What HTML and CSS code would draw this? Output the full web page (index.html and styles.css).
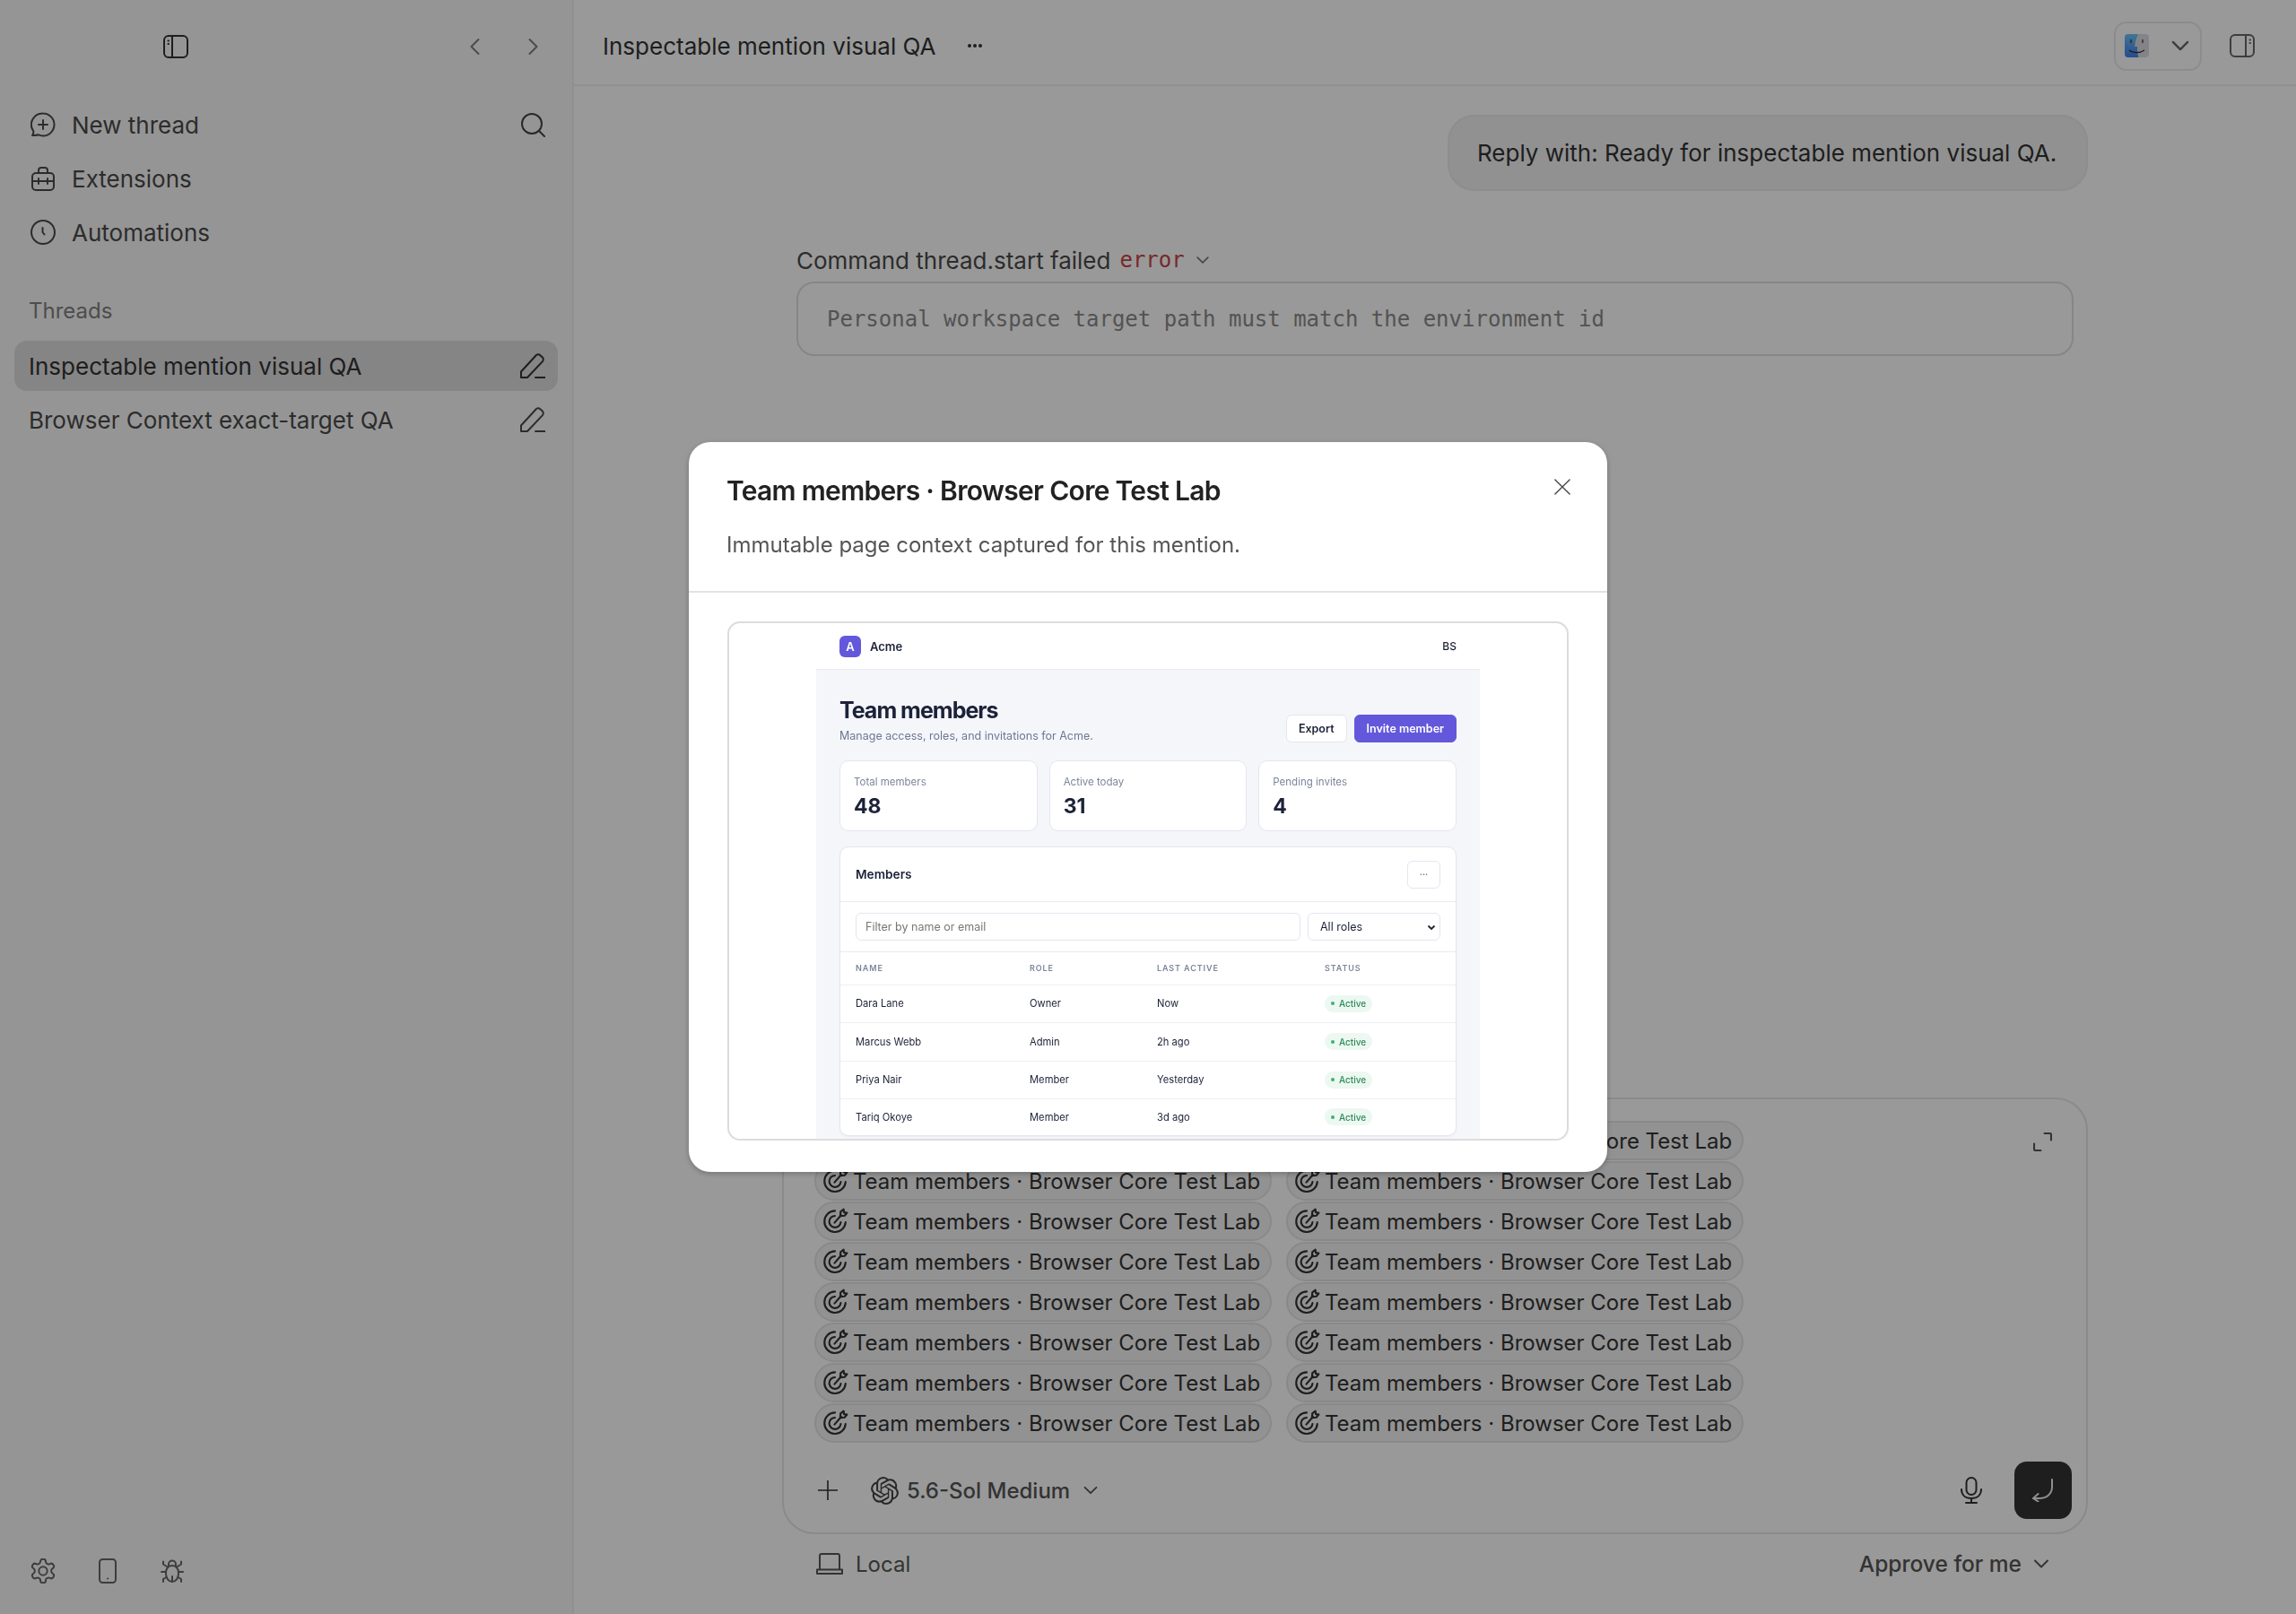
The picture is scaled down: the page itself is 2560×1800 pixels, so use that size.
FILE: index.html
```html
<!DOCTYPE html>
<html lang="en">
<head>
    <meta charset="UTF-8">
    <title>Inspectable mention visual QA</title>
    <link rel="stylesheet" href="styles.css">
</head>
<body>

    <svg class="sprite" width="0" height="0">
        <symbol id="i-target" viewBox="0 0 28 28"><path d="M14 3.2A11 11 0 1 0 25 15"/><path d="M14 8.400A6 6 0 1 0 20 15"/><path d="M13.500 15.500 20.500 7.500"/><path d="M19.500 8.500 19.800 4 23 1.500 23.400 4.800 26.500 5.200 24 8.200z"/></symbol>
        <symbol id="i-pencil" viewBox="0 0 28 28"><path d="M1 27v-6.500L17.500 2.500a3.400 3.400 0 0 1 4.800-.3l2.300 2.100a3.400 3.400 0 0 1 .3 4.800L8 27z"/><path d="M17 27h11"/></symbol>
        <symbol id="i-chev" viewBox="0 0 24 24"><path d="M5 8.500l7 7 7-7"/></symbol>
    </svg>

    <div class="app">
        <aside class="sidebar">
            <div class="side-top">
                <svg class="ic toggle" viewBox="0 0 28 26"><rect x="1" y="1" width="26" height="24" rx="5"/><path d="M10 1v24"/><path d="M5.500 6.500h.5M5.500 10h.5"/></svg>
                <div class="history">
                    <svg class="ic dim" viewBox="0 0 28 28"><path d="M17.500 6 9.500 14l8 8"/></svg>
                    <svg class="ic dim" viewBox="0 0 28 28"><path d="M10.500 6l8 8-8 8"/></svg>
                </div>
            </div>

            <nav class="side-nav">
                <div class="nav-row">
                    <svg class="ic" viewBox="0 0 28 28"><path d="M14 1.500a12.500 12.500 0 0 1 0 25c-2 0-4-.5-5.500-1.300-2 .8-4.500 1-6.500.8 1-1.300 1.500-3 1.300-4.700A12.500 12.500 0 0 1 14 1.500z"/><path d="M14 9v10M9 14h10"/></svg>
                    <span>New thread</span>
                    <svg class="ic search" viewBox="0 0 28 28"><circle cx="13" cy="13" r="11"/><path d="M21 21l6 6"/></svg>
                </div>
                <div class="nav-row">
                    <svg class="ic" viewBox="0 0 28 28"><path d="M9 8V5a3 3 0 0 1 3-3h4a3 3 0 0 1 3 3v3"/><rect x="2" y="8" width="24" height="19" rx="4"/><path d="M2 17h24M9 14v6M19 14v6"/></svg>
                    <span>Extensions</span>
                </div>
                <div class="nav-row">
                    <svg class="ic" viewBox="0 0 28 28"><circle cx="14" cy="14" r="13"/><path d="M13.500 9v5l2 2.500"/></svg>
                    <span>Automations</span>
                </div>
            </nav>

            <div class="side-label">Threads</div>
            <div class="thread-list">
                <div class="thread-row active">
                    <span>Inspectable mention visual QA</span>
                    <svg class="ic"><use href="#i-pencil"/></svg>
                </div>
                <div class="thread-row">
                    <span>Browser Context exact-target QA</span>
                    <svg class="ic"><use href="#i-pencil"/></svg>
                </div>
            </div>

            <div class="side-foot">
                <svg class="ic gear" viewBox="1.500 1.500 21 21"><path d="M12.220 2h-.44a2 2 0 0 0-2 2v.18a2 2 0 0 1-1 1.730l-.43.25a2 2 0 0 1-2 0l-.15-.08a2 2 0 0 0-2.730.73l-.22.38a2 2 0 0 0 .73 2.730l.15.1a2 2 0 0 1 1 1.720v.51a2 2 0 0 1-1 1.740l-.15.09a2 2 0 0 0-.73 2.730l.22.38a2 2 0 0 0 2.730.73l.15-.08a2 2 0 0 1 2 0l.43.25a2 2 0 0 1 1 1.730V20a2 2 0 0 0 2 2h.44a2 2 0 0 0 2-2v-.18a2 2 0 0 1 1-1.730l.43-.25a2 2 0 0 1 2 0l.15.08a2 2 0 0 0 2.730-.73l.22-.39a2 2 0 0 0-.73-2.730l-.15-.08a2 2 0 0 1-1-1.740v-.5a2 2 0 0 1 1-1.740l.15-.09a2 2 0 0 0 .73-2.730l-.22-.38a2 2 0 0 0-2.730-.73l-.15.08a2 2 0 0 1-2 0l-.43-.25a2 2 0 0 1-1-1.730V4a2 2 0 0 0-2-2z"/><circle cx="12" cy="12" r="3.500"/></svg>
                <svg class="ic" viewBox="0 0 28 28"><rect x="5" y="1" width="18" height="26" rx="3.500"/><path d="M14 22.500h.1"/></svg>
                <svg class="ic" viewBox="0 0 28 28"><path d="M10 8V6.500a4 4 0 0 1 8 0V8"/><path d="M14 8c-5 0-7 4-7 9s3 9 7 9 7-4 7-9-2-9-7-9z"/><path d="M14 20v6M7 15H2M21 15h5M8 9 4 6.500V3.500M20 9l4-2.500V3.500M7.500 21 4 23v3M20.500 21l3.500 2v3"/></svg>
            </div>
        </aside>

        <main class="main">
            <header class="main-top">
                <span class="main-title">Inspectable mention visual QA</span>
                <svg class="dots" viewBox="0 0 16 4"><circle cx="2" cy="2" r="2"/><circle cx="8" cy="2" r="2"/><circle cx="14" cy="2" r="2"/></svg>
                <div class="open-in">
                    <svg class="finder" viewBox="0 0 27 26">
                        <defs><linearGradient id="finderblue" x1="0" y1="0" x2="0" y2="1"><stop offset="0" stop-color="#5cc0f5"/><stop offset="1" stop-color="#2f6ff0"/></linearGradient></defs>
                        <rect width="27" height="26" rx="4" fill="#d5dae0"/>
                        <path d="M4 0h11c-2.500 5-3.500 9.500-3.800 14H14c0 4 .3 8 1.400 12H4a4 4 0 0 1-4-4V4a4 4 0 0 1 4-4z" fill="url(#finderblue)"/>
                        <path d="M7 6v4M20 6v4M5 18c4 3.500 12 3.500 17 0" fill="none" stroke="#1a1a1a" stroke-width="1.200"/>
                    </svg>
                    <svg class="ic chev"><use href="#i-chev"/></svg>
                </div>
                <svg class="ic panel" viewBox="0 0 28 26"><rect x="1" y="1" width="26" height="24" rx="5"/><path d="M18 1v24"/><path d="M22.500 6.500h.5M22.500 10h.5"/></svg>
            </header>

            <section class="thread">
                <div class="bubble">Reply with: Ready for inspectable mention visual QA.</div>

                <div class="cmd">
                    <div class="cmd-line">
                        <span>Command thread.start failed</span>
                        <code class="cmd-err">error</code>
                        <svg class="ic cmd-chev"><use href="#i-chev"/></svg>
                    </div>
                    <div class="cmd-box">Personal workspace target path must match the environment id</div>
                </div>

                <div class="composer">
                    <div class="composer-top">
                        <div class="chips">
                            <span class="chip"><svg class="ic"><use href="#i-target"/></svg>Team members · Browser Core Test Lab</span>
                            <span class="chip"><svg class="ic"><use href="#i-target"/></svg>Team members · Browser Core Test Lab</span>
                            <span class="chip"><svg class="ic"><use href="#i-target"/></svg>Team members · Browser Core Test Lab</span>
                            <span class="chip"><svg class="ic"><use href="#i-target"/></svg>Team members · Browser Core Test Lab</span>
                            <span class="chip"><svg class="ic"><use href="#i-target"/></svg>Team members · Browser Core Test Lab</span>
                            <span class="chip"><svg class="ic"><use href="#i-target"/></svg>Team members · Browser Core Test Lab</span>
                            <span class="chip"><svg class="ic"><use href="#i-target"/></svg>Team members · Browser Core Test Lab</span>
                            <span class="chip"><svg class="ic"><use href="#i-target"/></svg>Team members · Browser Core Test Lab</span>
                            <span class="chip"><svg class="ic"><use href="#i-target"/></svg>Team members · Browser Core Test Lab</span>
                            <span class="chip"><svg class="ic"><use href="#i-target"/></svg>Team members · Browser Core Test Lab</span>
                            <span class="chip"><svg class="ic"><use href="#i-target"/></svg>Team members · Browser Core Test Lab</span>
                            <span class="chip"><svg class="ic"><use href="#i-target"/></svg>Team members · Browser Core Test Lab</span>
                            <span class="chip"><svg class="ic"><use href="#i-target"/></svg>Team members · Browser Core Test Lab</span>
                            <span class="chip"><svg class="ic"><use href="#i-target"/></svg>Team members · Browser Core Test Lab</span>
                            <span class="chip"><svg class="ic"><use href="#i-target"/></svg>Team members · Browser Core Test Lab</span>
                            <span class="chip"><svg class="ic"><use href="#i-target"/></svg>Team members · Browser Core Test Lab</span>
                        </div>
                        <svg class="ic expand" viewBox="0 0 20 20"><path d="M12 1h6a1 1 0 0 1 1 1v6M8 19H2a1 1 0 0 1-1-1v-6"/></svg>
                    </div>
                    <div class="toolbar">
                        <svg class="ic plus" viewBox="0 0 22 22"><path d="M11 0v22M0 11h22"/></svg>
                        <svg class="openai" viewBox="0 0 24 24"><path d="M22.2819 9.8211a5.9847 5.9847 0 0 0-.5157-4.9108 6.0462 6.0462 0 0 0-6.5098-2.9A6.0651 6.0651 0 0 0 4.9807 4.1818a5.9847 5.9847 0 0 0-3.9977 2.9 6.0462 6.0462 0 0 0 .7427 7.0966 5.98 5.98 0 0 0 .511 4.9107 6.051 6.051 0 0 0 6.5146 2.9001A5.9847 5.9847 0 0 0 13.2599 24a6.0557 6.0557 0 0 0 5.7718-4.2058 5.9894 5.9894 0 0 0 3.9977-2.9001 6.0557 6.0557 0 0 0-.7475-7.0729zm-9.022 12.6081a4.4755 4.4755 0 0 1-2.8764-1.0408l.1419-.0804 4.7783-2.7582a.7948.7948 0 0 0 .3927-.6813v-6.7369l2.02 1.1686a.071.071 0 0 1 .038.052v5.5826a4.504 4.504 0 0 1-4.4945 4.4944zm-9.6607-4.1254a4.4708 4.4708 0 0 1-.5346-3.0137l.142.0852 4.783 2.7582a.7712.7712 0 0 0 .7806 0l5.8428-3.3685v2.3324a.0804.0804 0 0 1-.0332.0615L9.74 19.9502a4.4992 4.4992 0 0 1-6.1408-1.6464zM2.3408 7.8956a4.485 4.485 0 0 1 2.3655-1.9728V11.6a.7664.7664 0 0 0 .3879.6765l5.8144 3.3543-2.0201 1.1685a.0757.0757 0 0 1-.071 0l-4.8303-2.7865A4.504 4.504 0 0 1 2.3408 7.872zm16.5963 3.8558L13.1038 8.364 15.1192 7.2a.0757.0757 0 0 1 .071 0l4.8303 2.7913a4.4944 4.4944 0 0 1-.6765 8.1042v-5.6772a.79.79 0 0 0-.407-.667zm2.0107-3.0231l-.142-.0852-4.7735-2.7818a.7759.7759 0 0 0-.7854 0L9.409 9.2297V6.8974a.0662.0662 0 0 1 .0284-.0615l4.8303-2.7866a4.4992 4.4992 0 0 1 6.6802 4.66zM8.3065 12.863l-2.02-1.1638a.0804.0804 0 0 1-.038-.0567V6.0742a4.4992 4.4992 0 0 1 7.3757-3.4537l-.142.0805L8.704 5.459a.7948.7948 0 0 0-.3927.6813zm1.0976-2.3654l2.602-1.4998 2.6069 1.4998v2.9994l-2.5974 1.4997-2.6067-1.4997Z"/></svg>
                        <span class="model">5.6-Sol Medium</span>
                        <svg class="ic model-chev"><use href="#i-chev"/></svg>
                        <svg class="ic mic" viewBox="0 0 24 30"><rect x="6.500" y="1" width="11" height="19" rx="5.500"/><path d="M1 14c0 6 4 10 11 10s11-4 11-10M12 24v5M6 29h12"/></svg>
                        <button class="send"><svg class="ic" viewBox="0 0 24 26"><path d="M22 1v8c0 8-6 13-14 13H1"/><path d="M6.500 17 1 22l5.500 3.500"/></svg></button>
                    </div>
                </div>

                <div class="composer-foot">
                    <svg class="ic laptop" viewBox="0 0 30 24"><path d="M4 18V3a2 2 0 0 1 2-2h18a2 2 0 0 1 2 2v15"/><path d="M1 18.500h28V23H1z"/></svg>
                    <span class="local">Local</span>
                    <span class="approve">Approve for me</span>
                    <svg class="ic approve-chev"><use href="#i-chev"/></svg>
                </div>
            </section>
        </main>
    </div>

    <div class="overlay">
        <div class="modal">
            <svg class="ic close" viewBox="0 0 20 20"><path d="M1 1l18 18M19 1 1 19"/></svg>
            <div class="modal-head">
                <h2>Team members · Browser Core Test Lab</h2>
                <p>Immutable page context captured for this mention.</p>
            </div>
            <div class="modal-body">
                <div class="shot">
                    <div class="shot-inner">
                        <div class="acme-nav">
                            <span class="acme-logo">A</span>
                            <span class="acme-name">Acme</span>
                            <span class="acme-user">BS</span>
                        </div>
                        <div class="acme-page">
                            <div class="acme-head">
                                <div>
                                    <h1>Team members</h1>
                                    <p>Manage access, roles, and invitations for Acme.</p>
                                </div>
                                <div class="acme-btns">
                                    <span class="btn">Export</span>
                                    <span class="btn primary">Invite member</span>
                                </div>
                            </div>
                            <div class="stats">
                                <div class="stat"><small>Total members</small><b>48</b></div>
                                <div class="stat"><small>Active today</small><b>31</b></div>
                                <div class="stat"><small>Pending invites</small><b>4</b></div>
                            </div>
                            <div class="members">
                                <div class="members-head">
                                    <b>Members</b>
                                    <span class="more">···</span>
                                </div>
                                <div class="filters">
                                    <span class="filter">Filter by name or email</span>
                                    <span class="role-select">All roles
                                        <svg viewBox="0 0 10 10"><path d="M1.500 3.500 5 7l3.500-3.500"/></svg>
                                    </span>
                                </div>
                                <table>
                                    <thead>
                                        <tr><th>Name</th><th>Role</th><th>Last active</th><th>Status</th></tr>
                                    </thead>
                                    <tbody>
                                        <tr><td>Dara Lane</td><td>Owner</td><td>Now</td><td><span class="badge">Active</span></td></tr>
                                        <tr><td>Marcus Webb</td><td>Admin</td><td>2h ago</td><td><span class="badge">Active</span></td></tr>
                                        <tr><td>Priya Nair</td><td>Member</td><td>Yesterday</td><td><span class="badge">Active</span></td></tr>
                                        <tr><td>Tariq Okoye</td><td>Member</td><td>3d ago</td><td><span class="badge">Active</span></td></tr>
                                    </tbody>
                                </table>
                            </div>
                        </div>
                    </div>
                </div>
            </div>
        </div>
    </div>

</body>
</html>
```

FILE: styles.css
```css
* { box-sizing: border-box; margin: 0; padding: 0; }
html, body { height: 100%; }
body { font-family: Inter, "Noto Sans", sans-serif; font-size: 26px; color: #333; background: #fff; overflow: hidden; }
.sprite { position: absolute; }

.ic { width: 28px; height: 28px; fill: none; stroke: currentColor; stroke-width: 2; stroke-linecap: round; stroke-linejoin: round; flex: none; }

.app { display: flex; height: 1800px; }

/* sidebar */
.sidebar { width: 640px; flex: none; display: flex; flex-direction: column; background: #f9f9f9; border-right: 2px solid #f0f0f0; }
.side-top { height: 96px; flex: none; display: flex; align-items: center; padding: 8px 30px 0 182px; justify-content: space-between; }
.toggle { height: 26px; color: #333; }
.history { display: flex; gap: 36px; }
.dim { color: #7d7d7d; }
.side-nav { margin-top: 13px; }
.nav-row { height: 60px; display: flex; align-items: center; gap: 18px; padding: 0 30px 0 34px; color: #4a4a4a; }
.search { margin-left: auto; color: #444; }
.side-label { margin: 38px 0 13px 32px; line-height: 40px; color: #808080; font-size: 24px; }
.thread-list { display: flex; flex-direction: column; gap: 4px; margin: 0 16px; }
.thread-row { height: 56px; display: flex; align-items: center; justify-content: space-between; padding: 0 14px 0 16px; border-radius: 14px; color: #4a4a4a; }
.thread-row.active { background: #dedede; color: #333; }
.side-foot { margin-top: auto; display: flex; gap: 44px; padding: 0 0 34px 34px; color: #666; }
.gear { stroke-width: 1.500; }

/* main column */
.main { flex: 1; min-width: 0; display: flex; flex-direction: column; }
.main-top { height: 96px; flex: none; display: flex; align-items: center; padding: 8px 46px 0 32px; border-bottom: 2px solid #f0f0f0; }
.main-title { color: #333; }
.dots { width: 16px; height: 4px; margin-left: 36px; fill: #333; }
.open-in { margin-left: auto; width: 98px; height: 55px; display: flex; align-items: center; gap: 21px; padding-left: 10px; border: 2px solid #eaeaea; border-radius: 14px; }
.finder { width: 27px; height: 26px; flex: none; opacity: .9; }
.chev { color: #666; }
.panel { height: 26px; margin-left: 31px; color: #666; }

.thread { flex: 1; width: 1456px; margin: 0 auto; display: flex; flex-direction: column; }
.bubble { align-self: flex-end; width: 714px; height: 85px; margin-top: 32px; display: flex; align-items: center; padding: 0 31px; background: #f2f2f2; border: 2px solid #ececec; border-radius: 30px; color: #333; white-space: nowrap; }

.cmd { margin: 59px 16px 0; }
.cmd-line { height: 36px; display: flex; align-items: center; gap: 10px; color: #4a4a4a; }
.cmd-err { font-family: "DejaVu Sans Mono", "Liberation Mono", monospace; font-size: 24px; color: #c64545; }
.cmd-chev { width: 20px; height: 20px; color: #777; }
.cmd-box { height: 83px; margin-top: 6px; display: flex; align-items: center; padding: 0 32px; border: 2px solid #e0e0e0; border-radius: 20px; font-family: "DejaVu Sans Mono", "Liberation Mono", monospace; font-size: 24px; color: #8a8a8a; }

/* composer */
.composer { margin-top: auto; height: 487px; display: flex; flex-direction: column; padding: 24px 16px 15px 34px; border: 2px solid #e6e6e6; border-radius: 36px; }
.composer-top { display: flex; justify-content: space-between; align-items: flex-start; }
.chips { display: grid; grid-template-columns: 510px 510px; column-gap: 16px; row-gap: 1px; }
.chip { height: 44px; display: flex; align-items: center; gap: 5px; padding-left: 6px; border: 2px solid #e4e4e4; border-radius: 22px; background: #f4f4f4; color: #333; font-size: 24px; white-space: nowrap; }
.chip .ic { width: 30px; height: 30px; }
.expand { width: 21px; height: 21px; margin: 13px 22px 0 0; color: #555; }
.toolbar { margin-top: auto; display: flex; align-items: center; padding-left: 4px; }
.plus { width: 22px; height: 22px; color: #333; stroke-width: 1.600; }
.openai { width: 31px; height: 31px; flex: none; margin-left: 37px; fill: #444; }
.model { margin-left: 9px; color: #555; font-size: 24px; font-weight: 500; }
.model-chev { width: 22px; height: 22px; margin-left: 12px; color: #555; }
.mic { width: 24px; height: 30px; margin-left: auto; color: #333; }
.send { width: 64px; height: 64px; margin-left: 36px; display: flex; align-items: center; justify-content: center; background: #323232; border: none; border-radius: 14px; color: #eee; }
.send .ic { width: 24px; height: 26px; }
.composer-foot { flex: none; height: 40px; margin: 13px 0 36px; display: flex; align-items: center; padding: 0 40px 0 38px; color: #555; font-size: 24px; }
.laptop { width: 30px; height: 24px; }
.local { margin-left: 14px; }
.approve { margin-left: auto; font-size: 24.500px; font-weight: 500; }
.approve-chev { margin-left: 10px; width: 24px; height: 24px; }

/* modal */
.overlay { position: fixed; inset: 0; display: flex; align-items: center; justify-content: center; background: rgba(0, 0, 0, .4); }
.modal { position: relative; width: 1024px; height: 814px; background: #fff; border-radius: 24px; box-shadow: 0 2px 6px rgba(0, 0, 0, .25); }
.close { position: absolute; top: 41px; right: 41px; width: 18px; height: 18px; color: #444; stroke-width: 1.500; }
.modal-head { height: 168px; padding: 34px 42px 0; border-bottom: 2px solid #e3e3e3; }
.modal-head h2 { font-size: 30px; line-height: 40px; font-weight: 600; color: #222; letter-spacing: -.7px; }
.modal-head p { margin-top: 23px; line-height: 36px; font-size: 24px; color: #555; }
.modal-body { padding: 32px 43px 0; }
.shot { height: 579px; background: #fff; border: 2px solid #dcdcdc; border-radius: 14px; overflow: hidden; }
.shot-inner { width: 740px; margin: 0 auto; color: #1c2238; }

.acme-nav { height: 52px; display: flex; align-items: center; padding: 0 26px; border-bottom: 1px solid #e8eaf1; }
.acme-logo { width: 24px; height: 24px; display: flex; align-items: center; justify-content: center; background: #6358dc; border-radius: 6px; color: #fff; font-size: 13px; font-weight: 600; }
.acme-name { margin-left: 10px; font-size: 13px; font-weight: 600; }
.acme-user { margin-left: auto; font-size: 12px; font-weight: 500; }
.acme-page { padding: 30px 26px 20px; background: #f5f6fa; }
.acme-head { display: flex; justify-content: space-between; align-items: flex-end; }
.acme-head h1 { font-size: 25px; line-height: 30px; font-weight: 700; letter-spacing: -1px; }
.acme-head p { margin-top: 5px; font-size: 12.500px; line-height: 18px; color: #6c7790; }
.acme-btns { display: flex; gap: 8px; margin-bottom: 2px; }
.btn { height: 31px; padding: 0 13px; display: flex; align-items: center; background: #fff; border: 1px solid #e4e6ef; border-radius: 6px; font-size: 12.500px; font-weight: 600; }
.btn.primary { background: #6358dc; border-color: #6358dc; color: #fff; }
.stats { margin-top: 18px; display: grid; grid-template-columns: repeat(3, 1fr); gap: 13px; }
.stat { height: 79px; padding: 15px 15px 0; background: #fff; border: 1px solid #e4e6ef; border-radius: 10px; }
.stat small { display: block; font-size: 11.500px; line-height: 16px; color: #7c869b; }
.stat b { display: block; margin-top: 5px; font-size: 23px; line-height: 28px; font-weight: 700; }
.members { margin-top: 17px; background: #fff; border: 1px solid #e4e6ef; border-radius: 10px; box-shadow: 0 1px 2px rgba(30, 40, 70, .05); }
.members-head { height: 61px; display: flex; align-items: center; justify-content: space-between; padding: 0 17px; border-bottom: 1px solid #e8eaf1; font-size: 13.700px; }
.members-head b { font-weight: 600; }
.more { width: 37px; height: 31px; display: flex; align-items: center; justify-content: center; border: 1px solid #e4e6ef; border-radius: 6px; color: #666; font-size: 11px; }
.filters { height: 56px; display: flex; align-items: center; gap: 8px; padding: 0 17px; border-bottom: 1px solid #e8eaf1; font-size: 12.500px; }
.filter { flex: 1; height: 31px; display: flex; align-items: center; padding: 0 10px; border: 1px solid #e4e6ef; border-radius: 6px; color: #777; }
.role-select { width: 148px; height: 31px; display: flex; align-items: center; justify-content: space-between; padding: 0 4px 0 13px; border: 1px solid #e4e6ef; border-radius: 6px; }
.role-select svg { width: 10px; height: 10px; fill: none; stroke: #222; stroke-width: 1.800; }
table { width: 100%; border-collapse: collapse; table-layout: fixed; font-size: 11.200px; }
th { height: 36px; padding-left: 17px; text-align: left; font-size: 9px; font-weight: 600; letter-spacing: .9px; text-transform: uppercase; color: #7c869b; border-bottom: 1px solid #eef0f5; }
th:nth-child(1) { width: 211px; }
th:nth-child(2) { width: 142px; }
th:nth-child(3) { width: 187px; }
td { height: 42.500px; padding-left: 17px; border-bottom: 1px solid #eef0f5; }
tr td:nth-child(n+2), tr th:nth-child(n+2) { padding-left: 0; }
tbody tr:last-child td { height: 40px; border-bottom: none; }
.badge { display: inline-flex; align-items: center; gap: 5px; height: 19px; padding: 0 7px; background: #ecf8f1; border-radius: 10px; color: #2f8a57; font-size: 10px; font-weight: 500; }
.badge::before { content: ""; width: 4px; height: 4px; border-radius: 50%; background: #3bb273; }
```
